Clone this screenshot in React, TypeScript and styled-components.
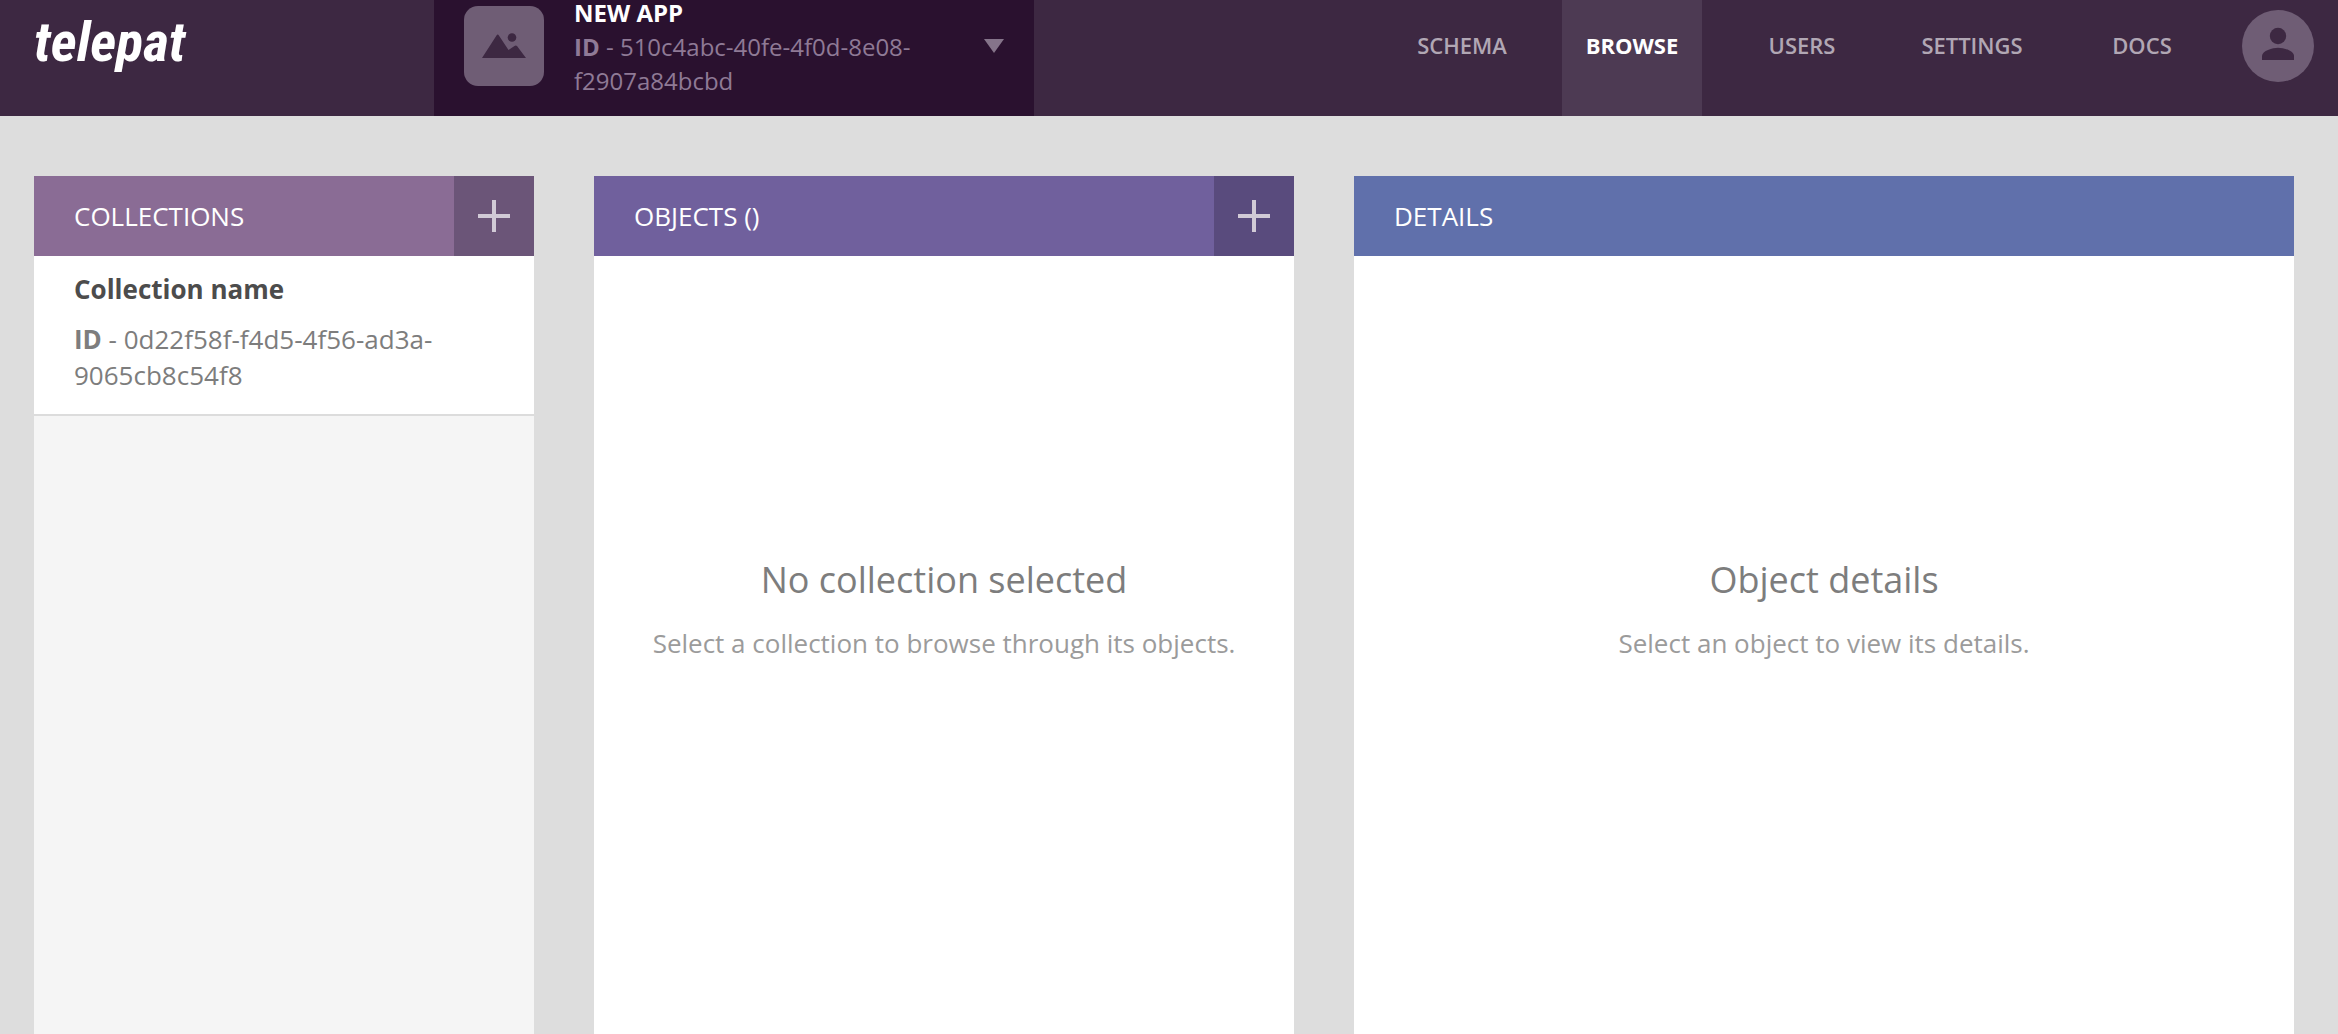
import React from "react";
import styled, { createGlobalStyle } from "styled-components";

const GlobalStyle = createGlobalStyle`
  *, *::before, *::after { box-sizing: border-box; }
  body {
    margin: 0;
    background: #dddddd;
    font-family: "Open Sans", "Noto Sans", sans-serif;
    font-size: 26px;
    line-height: 36px;
    color: #7d7d7d;
  }
  h2, h3, p, ul { margin: 0; padding: 0; }
  button { border: 0; padding: 0; font: inherit; cursor: pointer; }
  a { text-decoration: none; }
  svg { display: block; }
`;

const Page = styled.div`
  display: flex;
  flex-direction: column;
  height: 100vh;
  overflow: hidden;
`;

const Header = styled.header`
  flex: none;
  display: flex;
  justify-content: space-between;
  height: 116px;
  padding: 0 24px 0 34px;
  background: #3d2842;
`;

const Side = styled.div`
  display: flex;
`;

const Logo = styled.a`
  width: 400px;
  padding-bottom: 32px;
  display: flex;
  align-items: center;
  color: #ffffff;
  font-family: "Roboto Condensed", Roboto, sans-serif;
  font-size: 56px;
  line-height: 64px;
  font-weight: 700;
  font-style: italic;
`;

const AppPicker = styled.button`
  display: flex;
  align-items: center;
  gap: 30px;
  width: 600px;
  height: 116px;
  padding: 0 30px 24px;
  background: #2a112f;
  color: #8f7a96;
  text-align: left;
`;

const AppThumb = styled.span`
  flex: none;
  width: 80px;
  height: 80px;
  border-radius: 14px;
  background: #6f5d75;
`;

const AppInfo = styled.span`
  flex: 1;
  align-self: flex-start;
  font-size: 24px;
  line-height: 34px;
`;

const AppName = styled.strong`
  display: block;
  margin-bottom: 4px;
  line-height: 26px;
  color: #ffffff;
`;

const Nav = styled.nav`
  display: flex;
  gap: 30px;
  padding-right: 30px;
`;

const NavLink = styled.a<{ $active?: boolean }>`
  display: flex;
  align-items: center;
  justify-content: center;
  width: 140px;
  padding-bottom: 26px;
  background: ${(p) => (p.$active ? "#4d3a53" : "transparent")};
  color: ${(p) => (p.$active ? "#ffffff" : "#b1a7b4")};
  font-size: 22px;
  font-weight: ${(p) => (p.$active ? 700 : 600)};
`;

const Avatar = styled.button`
  width: 72px;
  height: 72px;
  margin-top: 10px;
  border-radius: 50%;
  background: #6f5d75;
`;

const Columns = styled.main`
  flex: 1;
  display: grid;
  grid-template-columns: 25fr 35fr 47fr;
  gap: 60px;
  padding: 60px 44px 0 34px;
`;

const Panel = styled.section<{ $muted?: boolean }>`
  display: flex;
  flex-direction: column;
  min-width: 0;
  background: ${(p) => (p.$muted ? "#f5f5f5" : "#ffffff")};
`;

const PanelHeader = styled.header<{ $color: string }>`
  display: flex;
  align-items: center;
  justify-content: space-between;
  height: 80px;
  padding-left: 40px;
  background: ${(p) => p.$color};
  color: #ffffff;
`;

const PanelTitle = styled.h2`
  font-size: 26px;
  font-weight: 400;
`;

const AddButton = styled.button<{ $color: string }>`
  display: flex;
  align-items: center;
  justify-content: center;
  width: 80px;
  height: 80px;
  background: ${(p) => p.$color};
  color: #d1cad6;
`;

const List = styled.ul`
  list-style: none;
`;

const CollectionItem = styled.li`
  display: flex;
  flex-direction: column;
  gap: 14px;
  padding: 15px 40px 21px;
  background: #ffffff;
  border-bottom: 2px solid #dcdcdc;
`;

const CollectionName = styled.h3`
  font-size: 26px;
  font-weight: 700;
  color: #4c4c4c;
`;

const EmptyState = styled.div`
  display: flex;
  flex-direction: column;
  align-items: center;
  gap: 20px;
  padding: 299px 40px 0;
  text-align: center;
`;

const EmptyTitle = styled.h3`
  font-size: 36px;
  line-height: 50px;
  font-weight: 400;
`;

const EmptyText = styled.p`
  color: #9b9b9b;
`;

function PlusIcon() {
  return (
    <svg width="32" height="32" viewBox="0 0 32 32" aria-hidden="true">
      <path d="M14 0h4v14h14v4H18v14h-4V18H0v-4h14z" fill="currentColor" />
    </svg>
  );
}

function Empty({ title, text }: { title: string; text: string }) {
  return (
    <EmptyState>
      <EmptyTitle>{title}</EmptyTitle>
      <EmptyText>{text}</EmptyText>
    </EmptyState>
  );
}

const links = ["SCHEMA", "BROWSE", "USERS", "SETTINGS", "DOCS"];

export default function App() {
  return (
    <Page>
      <GlobalStyle />
      <Header>
        <Side>
          <Logo href="#">telepat</Logo>
          <AppPicker type="button" aria-haspopup="listbox">
            <AppThumb>
              <svg width="80" height="80" viewBox="0 0 80 80" aria-hidden="true" fill="#3d2842">
                <path d="M18 52L32.500 29.500Q33.700 27.500 34.900 29.500L44.500 44L50.500 40Q51.800 38.800 53 40L62 52Z" />
                <circle cx="48" cy="31.500" r="4.300" />
              </svg>
            </AppThumb>
            <AppInfo>
              <AppName>NEW APP</AppName>
              <b>ID</b> - 510c4abc-40fe-4f0d-8e08-f2907a84bcbd
            </AppInfo>
            <svg width="20" height="14" viewBox="0 0 20 14" aria-hidden="true">
              <path d="M0 0h20L10 14z" fill="#85748a" />
            </svg>
          </AppPicker>
        </Side>
        <Side>
          <Nav>
            {links.map((label) => (
              <NavLink key={label} href="#" $active={label === "BROWSE"}>
                {label}
              </NavLink>
            ))}
          </Nav>
          <Avatar type="button" aria-label="Account">
            <svg width="72" height="72" viewBox="0 0 72 72" aria-hidden="true" fill="#3d2842">
              <circle cx="36" cy="26" r="8.200" />
              <path d="M20 50V46C20 40.700 30.700 37.700 36 37.700S52 40.700 52 46V50Z" />
            </svg>
          </Avatar>
        </Side>
      </Header>
      <Columns>
        <Panel $muted>
          <PanelHeader $color="#8a6c95">
            <PanelTitle>COLLECTIONS</PanelTitle>
            <AddButton type="button" aria-label="Add collection" $color="#6b5578">
              <PlusIcon />
            </AddButton>
          </PanelHeader>
          <List>
            <CollectionItem>
              <CollectionName>Collection name</CollectionName>
              <p>
                <b>ID</b> - 0d22f58f-f4d5-4f56-ad3a-9065cb8c54f8
              </p>
            </CollectionItem>
          </List>
        </Panel>
        <Panel>
          <PanelHeader $color="#70609d">
            <PanelTitle>OBJECTS ()</PanelTitle>
            <AddButton type="button" aria-label="Add object" $color="#594b7d">
              <PlusIcon />
            </AddButton>
          </PanelHeader>
          <Empty
            title="No collection selected"
            text="Select a collection to browse through its objects."
          />
        </Panel>
        <Panel>
          <PanelHeader $color="#6070ab">
            <PanelTitle>DETAILS</PanelTitle>
          </PanelHeader>
          <Empty title="Object details" text="Select an object to view its details." />
        </Panel>
      </Columns>
    </Page>
  );
}
